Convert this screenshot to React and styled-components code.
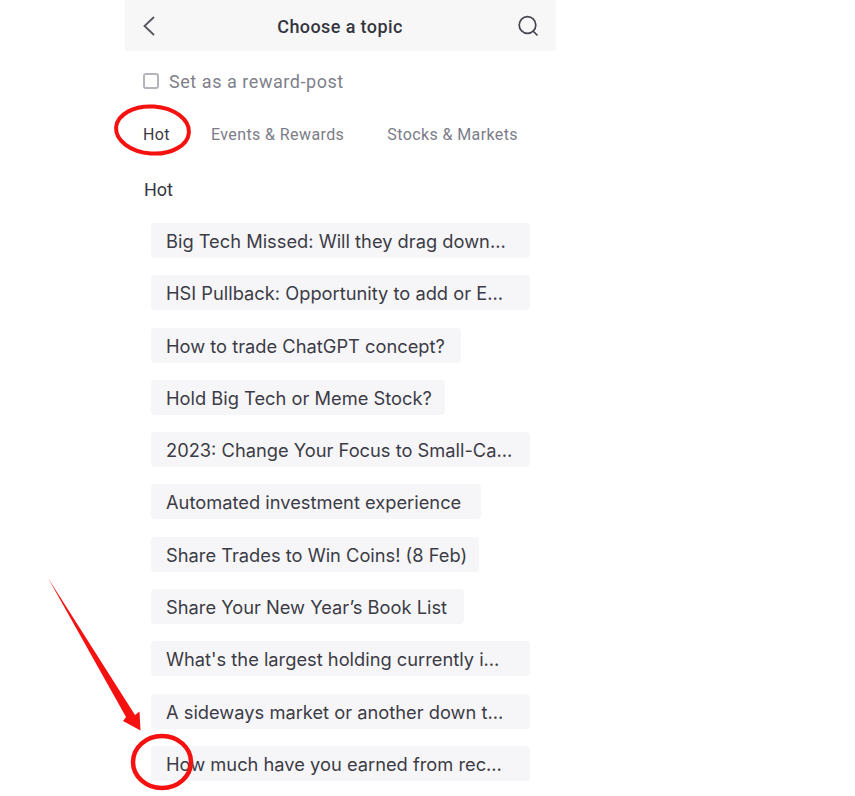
import React from 'react'
import styled, { createGlobalStyle } from 'styled-components'

const GlobalStyle = createGlobalStyle`
  html, body {
    margin: 0;
    padding: 0;
    background: #ffffff;
  }
`

const Page = styled.div`
  position: relative;
  width: 855px;
  height: 796px;
  overflow: hidden;
  background: #ffffff;
  font-family: Roboto, "Liberation Sans", sans-serif;
`

const Column = styled.div`
  width: 431px;
  margin-left: 125px;
`

const Header = styled.div`
  height: 51px;
  background: #f7f7f8;
  display: flex;
  align-items: center;
  justify-content: space-between;
  padding: 0 17px 0 16px;
  box-sizing: border-box;
`

const Title = styled.div`
  padding-top: 2px;
  font-size: 18px;
  font-weight: 500;
  letter-spacing: 0.4px;
  color: #35353f;
`

const RewardRow = styled.label`
  display: flex;
  align-items: center;
  gap: 10px;
  padding: 19px 0 0 18px;
  height: 22px;
  font-size: 18px;
  letter-spacing: 0.55px;
  color: #7f7f8a;
`

const Checkbox = styled.span`
  width: 12px;
  height: 12px;
  border: 2px solid #b4b4bc;
  border-radius: 3px;
`

const Tabs = styled.div`
  display: flex;
  padding: 31px 0 0 18px;
  height: 23px;
  align-items: center;
`

const Tab = styled.div`
  font-size: 16px;
  letter-spacing: 0.4px;
  margin-right: ${p => p.$gap}px;
  color: ${p => (p.$active ? '#3a3a44' : '#7c7c88')};
`

const SectionTitle = styled.div`
  font-size: 18px;
  color: #36363f;
  padding: 33px 0 0 19px;
  height: 22px;
  line-height: 22px;
`

const ChipList = styled.div`
  display: flex;
  flex-direction: column;
  align-items: flex-start;
  gap: 17.3px;
  padding: 22px 0 0 26px;
`

const Chip = styled.div`
  box-sizing: border-box;
  height: 35px;
  line-height: 37px;
  max-width: 379px;
  padding: 0 15px;
  border-radius: 4px;
  background: #f6f6f8;
  color: #3c3c46;
  font-family: Inter, "Noto Sans", sans-serif;
  font-size: 18.3px;
  white-space: nowrap;
  width: ${p => p.$width}px;
`

const Overlay = styled.svg`
  position: absolute;
  top: 0;
  left: 0;
  pointer-events: none;
`

const topics = [
  ['Big Tech Missed: Will they drag down…', 379],
  ['HSI Pullback: Opportunity to add or E…', 379],
  ['How to trade ChatGPT concept?', 310],
  ['Hold Big Tech or Meme Stock?', 294],
  ['2023: Change Your Focus to Small-Ca…', 379],
  ['Automated investment experience', 330],
  ['Share Trades to Win Coins! (8 Feb)', 328],
  ['Share Your New Year’s Book List', 313],
  ["What's the largest holding currently i…", 379],
  ['A sideways market or another down t…', 379],
  ['How much have you earned from rec…', 379],
]

export default function App() {
  return (
    <Page>
      <GlobalStyle />
      <Column>
        <Header>
          <svg width="22" height="22" viewBox="0 0 22 22" fill="none">
            <path d="M13 2 L3.5 11 L13 20" stroke="#55555f" strokeWidth="1.8" />
          </svg>
          <Title>Choose a topic</Title>
          <svg width="22" height="22" viewBox="0 0 22 22" fill="none">
            <circle cx="10.5" cy="10" r="8.3" stroke="#45454f" strokeWidth="1.7" />
            <path d="M16.5 16.5 L20 20" stroke="#45454f" strokeWidth="1.7" strokeLinecap="round" />
          </svg>
        </Header>
        <RewardRow>
          <Checkbox />
          Set as a reward-post
        </RewardRow>
        <Tabs>
          <Tab $active $gap={41}>Hot</Tab>
          <Tab $gap={43}>Events &amp; Rewards</Tab>
          <Tab $gap={0}>Stocks &amp; Markets</Tab>
        </Tabs>
        <SectionTitle>Hot</SectionTitle>
        <ChipList>
          {topics.map(([text, width]) => (
            <Chip key={text} $width={width}>{text}</Chip>
          ))}
        </ChipList>
      </Column>
      <Overlay width="855" height="796" viewBox="0 0 855 796" fill="none">
        <ellipse cx="152.5" cy="130" rx="36.5" ry="23.5" stroke="#f5110f" strokeWidth="4" transform="rotate(4 152.5 130)" />
        <ellipse cx="162" cy="762" rx="29" ry="26" stroke="#f5110f" strokeWidth="4.5" />
        <path d="M48 578 L126 717 L123 721 L140.5 730.5 L139.5 711.5 L135 715 Z" fill="#f5110f" />
      </Overlay>
    </Page>
  )
}
